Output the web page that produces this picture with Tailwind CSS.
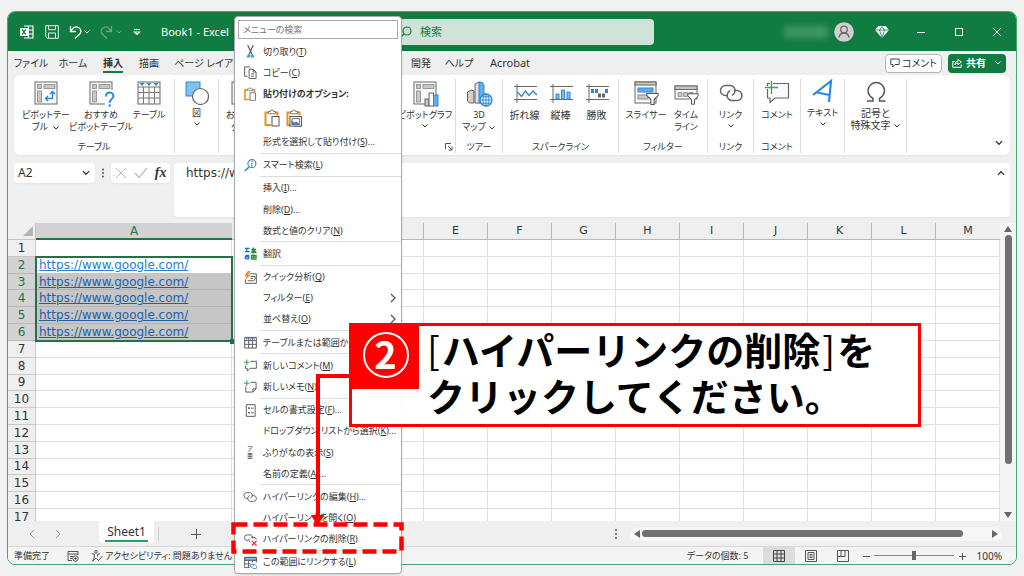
<!DOCTYPE html>
<html lang="ja">
<head>
<meta charset="utf-8">
<title>Book1 - Excel</title>
<script src="https://cdn.jsdelivr.net/npm/@tailwindcss/browser@4"></script>
</head>
<body class="relative flex h-screen flex-col overflow-hidden bg-[#f1f1f1] px-[7px] pt-[11px] pb-[11px] text-[10px] leading-3 text-[#333] [font-family:'Noto_Sans','Noto_Sans_CJK_JP',sans-serif] [font-feature-settings:'palt']">

<svg class="hidden">
  <defs>
    <symbol id="chev" viewBox="0 0 8 6"><path d="M1.500 1.500 4 4l2.500-2.500" fill="none" stroke="currentColor" stroke-width="1"/></symbol>
    <symbol id="pivot" viewBox="0 0 24 24"><rect x="1" y="1" width="22" height="22" fill="#fafafa" stroke="#666"/><rect x="3.500" y="3.500" width="4" height="4" fill="#c9c7c5" stroke="#888" stroke-width=".8"/><rect x="10" y="3.500" width="11" height="4" fill="#c9c7c5" stroke="#888" stroke-width=".8"/><rect x="3.500" y="10" width="4" height="11" fill="#c9c7c5" stroke="#888" stroke-width=".8"/></symbol>
    <symbol id="funnel" viewBox="0 0 12 12"><path d="M.8.8h10.400v2L7.500 6.500v4.700h-3V6.500L.8 2.800z" fill="#fff" stroke="#555" stroke-width="1"/></symbol>
    <symbol id="link" viewBox="0 0 24 18"><g fill="none" stroke="currentColor" stroke-width="1.500"><path d="M9 11.500H6.500a5 5 0 0 1 0-10H11a5 5 0 0 1 4.500 7.500q-.8 1.500-2.500 2.200"/><path d="M15 6.500h3a5 5 0 0 1 0 10h-5a5 5 0 0 1-4.300-7.400q.8-1.600 2.500-2.300"/></g></symbol>
    <symbol id="clip" viewBox="0 0 16 18"><path d="M5 3.500H1.500v12.500H7M11 3.500H13.500V6.500" fill="none" stroke="#ed8b1c" stroke-width="2"/><path d="M4.500 4.800V2.500h2a1.500 1.500 0 0 1 3 0h2v2.300z" fill="#fff" stroke="#777"/><rect x="8" y="7.500" width="7" height="9.500" fill="#fff" stroke="#555"/></symbol>
  </defs>
</svg>

<div class="flex min-h-0 flex-1 flex-col overflow-hidden rounded-lg border border-[#43a574] bg-[#efefef]">

  <!-- title bar -->
  <header class="flex h-[39px] shrink-0 items-center bg-[#107c41] text-white">
    <div class="flex w-[384px] items-center pl-3">
      <svg class="h-3.5 w-3.5" viewBox="0 0 14 14"><path d="M4 1h9v12H4M4 5h9M4 9h9M8.500 1v12" fill="none" stroke="#fff" stroke-width="1.200"/><rect x="0" y="3" width="8" height="8" fill="#fff"/><path d="m2.300 4.700 3.400 4.600M5.700 4.700 2.300 9.300" stroke="#107c41" stroke-width="1.300"/></svg>
      <button class="ml-[11px]" aria-label="保存"><svg class="h-3.5 w-3.5" viewBox="0 0 14 14" fill="none" stroke="#e4f2ea"><path d="M.7.7h12.600v12.600H2.500L.7 11.500z"/><path d="M3.500.7v4h7v-4M3.500 13V8h7v5"/></svg></button>
      <button class="ml-2.5 flex items-center" aria-label="元に戻す"><svg class="h-3.5 w-3.5" viewBox="0 0 14 14" fill="none" stroke="#fff" stroke-width="1.300"><path d="M1.500 1v5.500H7M1.700 6.300C4 2.500 7 1.200 9.500 2.500c3 1.700 3 5 .8 7L6 13.500"/></svg><svg class="h-1.5 w-2"><use href="#chev"/></svg></button>
      <button class="ml-2 flex items-center text-[#5fae84]" aria-label="やり直し"><svg class="h-3.5 w-3.5" viewBox="0 0 14 14" fill="none" stroke="currentColor" stroke-width="1.300"><path d="M12.500 1v5.500H7M12.300 6.300C10 2.500 7 1.200 4.500 2.500c-3 1.700-3 5-.8 7L8 13.500"/></svg><svg class="ml-0.5 h-1.5 w-2"><use href="#chev"/></svg></button>
      <button class="ml-2.5" aria-label="クイック アクセス"><svg class="h-2 w-2" viewBox="0 0 8 8" fill="none" stroke="#fff" stroke-width="1.200"><path d="M1 1.500h6M1.500 4 4 6.500 6.500 4z"/></svg></button>
      <h1 class="ml-5 text-[11px] whitespace-pre">Book1 - Excel</h1>
    </div>
    <label class="flex h-[26px] w-[262px] items-center gap-2 rounded bg-[#cfe3d8] pl-2 text-[#107c41]">
      <svg class="h-3 w-3" viewBox="0 0 12 12" fill="none" stroke="#107c41" stroke-width="1.200"><circle cx="7" cy="5" r="4"/><path d="M4 8 .5 11.500"/></svg>
      <input class="w-40 bg-transparent text-[11px] outline-none placeholder:text-[#107c41]" placeholder="検索" aria-label="検索">
    </label>
    <div class="ml-auto flex items-center pr-3.5">
      <span class="mr-1.5 h-3 w-11 bg-white/20 blur-[3px]"></span>
      <svg class="h-5 w-5" viewBox="0 0 20 20"><circle cx="10" cy="10" r="9.800" fill="#d0d0d0"/><circle cx="10" cy="7.500" r="3.300" fill="none" stroke="#666" stroke-width="1.300"/><path d="M5 15.500c.5-3 2.500-4.500 5-4.500s4.500 1.500 5 4.500" fill="none" stroke="#666" stroke-width="1.300"/></svg>
      <svg class="ml-[21px] h-3 w-3.5" viewBox="0 0 14 12"><path d="M3.300 0h7.400L14 4 7 12 0 4z" fill="#fff"/><path d="M0 4h14M4.500 4 7 11.500 9.500 4M4.500 4 7 .5 9.500 4" fill="none" stroke="#107c41" stroke-width=".8"/></svg>
      <button class="ml-[27px]" aria-label="最小化"><svg class="h-2.5 w-2.5" viewBox="0 0 10 10"><path d="M1 5.500h8" stroke="#fff"/></svg></button>
      <button class="ml-7" aria-label="最大化"><svg class="h-2.5 w-2.5" viewBox="0 0 10 10"><rect x="1.500" y="1.500" width="7" height="7" fill="none" stroke="#fff"/></svg></button>
      <button class="ml-7" aria-label="閉じる"><svg class="h-2.5 w-2.5" viewBox="0 0 10 10"><path d="m1 1 8 8M9 1 1 9" stroke="#fff"/></svg></button>
    </div>
  </header>

  <!-- ribbon tabs -->
  <nav class="flex h-6 shrink-0 items-center text-center whitespace-nowrap">
    <button class="w-[46px]">ファイル</button>
    <button class="w-[38px]">ホーム</button>
    <button class="flex h-full w-[42px] items-center justify-center font-bold"><span class="border-b-2 border-[#107c41] pt-1 pb-0.5">挿入</span></button>
    <button class="w-[30px]">描画</button>
    <button class="w-24">ページ レイアウト</button>
    <button class="w-9">数式</button>
    <button class="w-9">データ</button>
    <button class="w-8">校閲</button>
    <button class="w-9">表示</button>
    <button class="w-[42px]">開発</button>
    <button class="w-[34px]">ヘルプ</button>
    <button class="w-[68px] text-[11px]">Acrobat</button>
    <div class="ml-auto flex gap-1.5 pr-2.5">
      <button class="flex h-[19px] w-[57px] items-center justify-center gap-0.5 rounded border border-[#b5b5b5] bg-white"><svg class="h-2.5 w-2.5" viewBox="0 0 10 10" fill="none" stroke="#444"><path d="M.8 1h8.400v5.500H5L2.800 9V6.500h-2z"/></svg>コメント</button>
      <button class="flex h-[19px] w-[58px] items-center justify-center gap-1 rounded bg-[#107c41] font-bold text-white"><svg class="h-2.5 w-2.5" viewBox="0 0 10 10" fill="none" stroke="#fff"><path d="M3 3.500H.8V9.300h8.400V6.500M3 7c0-3 1.500-3.500 3-3.500V1.300L9.300 4 6 6.800V5C4.500 5 3.700 5.500 3 7"/></svg>共有<svg class="ml-1 h-1.5 w-2"><use href="#chev"/></svg></button>
    </div>
  </nav>

  <!-- ribbon -->
  <section class="mx-1.5 flex h-20 shrink-0 rounded-md bg-white pt-1 pb-0.5 text-center text-[9px] whitespace-nowrap shadow-xs">
    <div class="flex w-[161px] flex-col justify-between border-r border-[#dcdcdc]">
      <div class="flex">
        <button class="flex w-16 flex-col items-center"><svg class="mt-0.5 mb-1 h-6 w-6" viewBox="0 0 24 24"><use href="#pivot"/><path d="M11.500 17.500h7v-7M14 15l-2.500 2.500L14 20M16 13l2.500-2.500L21 13" fill="none" stroke="#2b88d8" stroke-width="1.400"/></svg><span>ピボットテー<br>ブル<svg class="ml-1 inline h-1.5 w-2"><use href="#chev"/></svg></span></button>
        <button class="flex w-[46px] flex-col items-center"><svg class="mt-0.5 mb-1 h-6 w-6 overflow-visible" viewBox="0 0 24 24"><use href="#pivot"/><path d="M16 9h9v17h-9z" fill="#fff"/><path d="M17 15.500c.3-5.500 8-5 7.300.2-.3 2-3.600 2.800-3.600 6" fill="none" stroke="#2b88d8" stroke-width="2"/><circle cx="20.700" cy="24.500" r="1.200" fill="#2b88d8"/></svg><span>おすすめ<br>ピボットテーブル</span></button>
        <button class="flex w-[50px] flex-col items-center"><svg class="mt-0.5 mb-1 h-6 w-6" viewBox="0 0 24 24"><rect x="1" y="1" width="22" height="22" fill="#fafafa" stroke="#666"/><path d="M1 6h22M1 11.500h22M1 17h22M6.500 6v17M12 6v17M17.500 6v17" stroke="#777" fill="none"/><path d="M2.500 2h5L5 5zM9.500 2h5L12 5zM16.500 2h5L19 5z" fill="#2b88d8"/></svg><span>テーブル</span></button>
      </div>
      <span>テーブル</span>
    </div>
    <div class="w-11 border-r border-[#dcdcdc]">
      <button class="flex w-full flex-col items-center"><svg class="my-0.5 h-6 w-6" viewBox="0 0 24 24"><rect x="1" y="1" width="14" height="14" fill="#83beec" stroke="#2b88d8"/><circle cx="15.500" cy="15.500" r="8" fill="#fff" stroke="#666" stroke-width="1.200"/></svg>図<svg class="mt-0.5 h-1.5 w-2"><use href="#chev"/></svg></button>
    </div>
    <div class="relative flex w-[237px] justify-between border-r border-[#dcdcdc]">
      <button class="flex w-12 flex-col items-center"><svg class="mt-0.5 mb-1 h-6 w-6"><use href="#pivot"/></svg><span>おすすめ<br>グラフ</span></button>
      <button class="flex w-[60px] flex-col items-center"><svg class="mt-0.5 mb-1 h-6 w-6 overflow-visible" viewBox="0 0 24 24"><use href="#pivot"/><g stroke="#666"><rect x="12" y="18" width="4" height="7" fill="#c9c7c5"/><rect x="16" y="12" width="4.500" height="13" fill="#fff"/><rect x="20.500" y="14" width="4.500" height="11" fill="#62aee8" stroke="#2b88d8"/></g></svg><span>ピボットグラフ</span><svg class="mt-0.5 h-1.5 w-2"><use href="#chev"/></svg></button>
      <svg class="absolute right-0.5 bottom-0.5 h-2 w-2" viewBox="0 0 8 8" fill="none" stroke="#555"><path d="M.5 6V.5H6M3 3l4 4M7 3.500V7H3.500"/></svg>
    </div>
    <div class="flex w-[47px] flex-col justify-between border-r border-[#dcdcdc]">
      <button class="flex flex-col items-center"><svg class="mt-0.5 mb-1 h-6 w-6 overflow-visible" viewBox="0 0 24 24"><path d="M.5 11 4 9l3 1v12H2.500L.5 20z" fill="#d2d0ce" stroke="#666"/><path d="M8 3l4-2 3 1v20H8z" fill="#e4e2e0" stroke="#666"/><path d="M12 1.500 15 1l2 3v18h-5z" fill="#62aee8" stroke="#2b88d8"/><circle cx="19" cy="19" r="6" fill="#fff" stroke="#2b88d8" stroke-width="1.300"/><path d="M13 19h12M19 13v12M14.500 15.800h9M14.500 22.200h9" stroke="#2b88d8" fill="none"/><ellipse cx="19" cy="19" rx="3" ry="6" fill="none" stroke="#2b88d8"/></svg><span>3D<br>マップ<svg class="ml-0.5 inline h-1.5 w-2"><use href="#chev"/></svg></span></button>
      <span>ツアー</span>
    </div>
    <div class="flex w-[116px] flex-col justify-between border-r border-[#dcdcdc]">
      <div class="flex justify-center text-[10px]">
        <button class="flex w-9 flex-col items-center"><svg class="mt-0.5 mb-1 h-6 w-6" viewBox="0 0 24 24" fill="none"><path d="M4 3v19M1 5.500h23M1 18.500h23" stroke="#666"/><path d="m4.500 11 4 4.500 4-5.500 3.500 4.500L20 10l4 4" stroke="#2b88d8" stroke-width="1.300"/></svg>折れ線</button>
        <button class="flex w-9 flex-col items-center"><svg class="mt-0.5 mb-1 h-6 w-6" viewBox="0 0 24 24" fill="none"><path d="M4 3v19M1 5.500h23M1 18.500h23" stroke="#666"/><path d="M7 13h3v5H7zM12.500 9h3v9h-3zM18 11h3v7h-3z" fill="#83beec" stroke="#2b88d8"/></svg>縦棒</button>
        <button class="flex w-9 flex-col items-center"><svg class="mt-0.5 mb-1 h-6 w-6" viewBox="0 0 24 24"><path d="M4 3v19M1 5.500h23M1 18.500h23" stroke="#666"/><path d="M6 8h3v4H6zM10 8h3v4h-3zM20 8h3v4h-3z" fill="#2b88d8"/><path d="M13 12.500h3v4h-3zM17 12.500h3v4h-3z" fill="#666"/></svg>勝敗</button>
      </div>
      <span>スパークライン</span>
    </div>
    <div class="flex w-[89px] flex-col justify-between border-r border-[#dcdcdc]">
      <div class="flex justify-center pl-1.5">
        <button class="flex w-10 flex-col items-center"><svg class="mt-0.5 mb-1 h-6 w-6 overflow-visible" viewBox="0 0 24 24"><rect x="1" y="1" width="21" height="21" fill="#fafafa" stroke="#666"/><rect x="1" y="1" width="21" height="3" fill="#c9c7c5" stroke="#666"/><rect x="4" y="7" width="15" height="4" fill="#62aee8" stroke="#2b88d8"/><rect x="4" y="14" width="10" height="4" fill="#c9c7c5" stroke="#888"/><svg x="12" y="11.500" width="13" height="13"><use href="#funnel"/></svg></svg>スライサー</button>
        <button class="flex w-10 flex-col items-center"><svg class="mt-0.5 mb-1 h-6 w-6 overflow-visible" viewBox="0 0 24 24"><rect x="1" y="5" width="22" height="13" fill="#fafafa" stroke="#666"/><rect x="1" y="5" width="22" height="3.500" fill="#c9c7c5" stroke="#666"/><path d="M4 11.500h4v4H4zM9.500 11.500h4v4h-4zM15 11.500h4v4h-4z" fill="#c9c7c5" stroke="#888" stroke-width=".8"/><svg x="13" y="12" width="12" height="12"><use href="#funnel"/></svg></svg><span>タイム<br>ライン</span></button>
      </div>
      <span>フィルター</span>
    </div>
    <div class="flex w-[46px] flex-col justify-between border-r border-[#dcdcdc]">
      <button class="flex flex-col items-center"><svg class="mt-0.5 mb-1 h-6 w-6 text-[#666]"><use href="#link"/></svg>リンク<svg class="mt-0.5 h-1.5 w-2"><use href="#chev"/></svg></button>
      <span>リンク</span>
    </div>
    <div class="flex w-[47px] flex-col justify-between border-r border-[#dcdcdc]">
      <button class="flex flex-col items-center"><svg class="mt-0.5 mb-1 h-6 w-6 overflow-visible" viewBox="0 0 24 24"><path d="M2.500 2.500h21V17H10l-5 4.500V17H2.500z" fill="#fafafa" stroke="#666" stroke-width="1.200"/><path d="M0 6.500h13M6.500 0v13" stroke="#fff" stroke-width="3"/><path d="M0 6.500h13M6.500 0v13" stroke="#3fa35b" stroke-width="1.400"/></svg>コメント</button>
      <span>コメント</span>
    </div>
    <div class="w-11 border-r border-[#dcdcdc]">
      <button class="flex w-full flex-col items-center"><svg class="mb-0.5 h-6 w-6" viewBox="0 0 24 24"><path d="M2 16 20 2l-2 21M6 13.500 18.500 16" fill="none" stroke="#2b88d8" stroke-width="2.200"/></svg><span class="mt-0.5">テキスト</span><svg class="mt-0.5 h-1.5 w-2"><use href="#chev"/></svg></button>
    </div>
    <div class="w-[62px] border-r border-[#dcdcdc] text-[10px]">
      <button class="flex w-full flex-col items-center"><svg class="mb-0.5 h-6 w-6" viewBox="0 0 24 24"><path d="M3 22h6v-2.500C5.500 17.500 4 14.500 4 11a8.300 8.300 0 0 1 16.500 0c0 3.500-1.500 6.500-5 8.500V22h6" fill="none" stroke="#555" stroke-width="1.500"/></svg><span class="mt-0.5">記号と<br>特殊文字<svg class="ml-0.5 inline h-1.5 w-2"><use href="#chev"/></svg></span></button>
    </div>
    <button class="mt-auto mr-1.5 mb-1.5 ml-auto" aria-label="リボンを折りたたむ"><svg class="h-2 w-2.5"><use href="#chev"/></svg></button>
  </section>

  <!-- formula bar -->
  <section class="flex h-[68px] shrink-0 items-start px-1.5 pt-2 text-[12px] leading-4">
    <button class="flex h-5 w-[81px] items-center justify-between rounded bg-white px-1 shadow-xs">A2<svg class="h-2 w-2.5"><use href="#chev"/></svg></button>
    <svg class="mx-1.5 h-5 w-1" viewBox="0 0 4 20" fill="#555"><circle cx="2" cy="6.500" r="1"/><circle cx="2" cy="10" r="1"/><circle cx="2" cy="13.500" r="1"/></svg>
    <div class="mr-1 flex h-5 w-[59px] items-center justify-around rounded bg-white shadow-xs">
      <button aria-label="キャンセル"><svg class="h-3 w-3" viewBox="0 0 12 12"><path d="m1 1 10 10M11 1 1 11" stroke="#bbb"/></svg></button>
      <button aria-label="入力"><svg class="h-3 w-3.5" viewBox="0 0 14 12"><path d="m1 6 4 4.500L13 1" fill="none" stroke="#bbb" stroke-width="1.200"/></svg></button>
      <button class="text-[14px] font-bold italic [font-family:'Liberation_Serif',serif]">fx</button>
    </div>
    <div class="flex h-[54px] flex-1 justify-between rounded bg-white px-3 pt-0.5 shadow-xs [font-family:'DejaVu_Sans',sans-serif]">https://www.google.com/
      <svg class="mt-1 -mr-2 h-2 w-2.5 rotate-180"><use href="#chev"/></svg></div>
  </section>

  <!-- sheet -->
  <section class="flex min-h-0 flex-1">
    <div class="min-w-0 flex-1 overflow-hidden">
      <table class="h-[303px] w-full table-fixed border-separate border-spacing-0 text-[12px] [font-family:'DejaVu_Sans',sans-serif]">
        <thead id="head"></thead>
        <tbody id="grid" class="bg-white"></tbody>
      </table>
    </div>
    <div class="flex w-4 flex-col items-center bg-[#f4f4f4] pt-0.5">
      <svg class="h-2 w-2" viewBox="0 0 8 8"><path d="M4 1 8 7H0z" fill="#666"/></svg>
      <span class="mt-0.5 h-[229px] w-[7px] rounded-full bg-[#707070]"></span>
      <svg class="mt-auto mb-0.5 h-2 w-2" viewBox="0 0 8 8"><path d="M4 7 8 1H0z" fill="#666"/></svg>
    </div>
  </section>

  <!-- sheet tabs -->
  <section class="flex h-[26px] shrink-0 items-center border-b border-[#d8d8d8]">
    <button class="ml-5" aria-label="前のシート"><svg class="h-2.5 w-2" viewBox="0 0 8 10"><path d="M6 1 2 5l4 4" fill="none" stroke="#999"/></svg></button>
    <button class="ml-[18px]" aria-label="次のシート"><svg class="h-2.5 w-2" viewBox="0 0 8 10"><path d="m2 1 4 4-4 4" fill="none" stroke="#999"/></svg></button>
    <button class="mb-auto ml-[37px] flex h-[22px] w-[55px] items-center justify-center rounded-b bg-white text-[12px]"><span class="border-b-2 border-[#21a366] px-0.5 pt-1 pb-0.5">Sheet1</span></button>
    <span class="ml-1 h-3.5 w-px bg-[#d0d0d0]"></span>
    <button class="ml-8" aria-label="新しいシート"><svg class="h-2.5 w-2.5" viewBox="0 0 10 10"><path d="M0 5.500h10M5.500 0v10" stroke="#555"/></svg></button>
    <svg class="ml-auto h-3 w-1" viewBox="0 0 4 12" fill="#555"><circle cx="2" cy="2" r="1"/><circle cx="2" cy="6" r="1"/><circle cx="2" cy="10" r="1"/></svg>
    <div class="mr-3.5 ml-3 flex h-3.5 w-[372px] items-center rounded-full bg-[#f6f6f6] px-1">
      <svg class="h-2 w-1.5" viewBox="0 0 6 8"><path d="M0 4 6 0v8z" fill="#666"/></svg>
      <span class="ml-0.5 h-[7px] w-[321px] rounded-full bg-[#707070]"></span>
      <svg class="ml-auto h-2 w-1.5" viewBox="0 0 6 8"><path d="M6 4 0 0v8z" fill="#666"/></svg>
    </div>
  </section>

  <!-- status bar -->
  <footer class="flex h-[17px] shrink-0 items-center bg-[#f4f4f4] pl-1.5 whitespace-nowrap">
    <span class="w-[53px] text-[9px]">準備完了</span>
    <svg class="h-3 w-3" viewBox="0 0 12 12" fill="none" stroke="#555"><path d="M5 10.500H1V1.500h10V5M1 4h10M3 6.500h3M3 8.500h2"/><circle cx="8.500" cy="8.500" r="2.700"/><circle cx="8.500" cy="8.500" r=".8" fill="#555"/></svg>
    <svg class="mr-0.5 ml-3 h-3 w-3" viewBox="0 0 12 12" fill="none" stroke="#555"><circle cx="5" cy="1.800" r="1.300"/><path d="M.8 3.500 3.500 4.500 3 8l-1.500 3.300L5 8M9.200 3.500 6.500 4.500v2M5.500 8.500l2 2L11.500 6"/></svg>
    <span class="text-[9px]">アクセシビリティ: 問題ありません</span>
    <span class="ml-auto text-[9px]">データの個数: 5</span>
    <button class="ml-3.5 flex h-full w-8 items-center justify-center bg-[#dcdcdc]" aria-label="標準"><svg class="h-3 w-3" viewBox="0 0 12 12"><path d="M.5.5h11v11H.5zM.5 4h11M.5 8h11M4 .5v11M8 .5v11" fill="none" stroke="#444"/></svg></button>
    <button class="flex w-8 justify-center" aria-label="ページ レイアウト"><svg class="h-3 w-3" viewBox="0 0 12 12"><path d="M.5.5h11v11H.5zM3 2.500h6v7H3zM4.500 4.500h3M4.500 6h3M4.500 7.500h3" fill="none" stroke="#555"/></svg></button>
    <button class="flex w-8 justify-center" aria-label="改ページ"><svg class="h-3 w-3" viewBox="0 0 12 12"><path d="M.5.5h11v11H.5zM4 .5v6M8 .5v6H.5" fill="none" stroke="#555"/></svg></button>
    <button class="ml-1" aria-label="縮小"><svg class="h-2 w-2" viewBox="0 0 8 8"><path d="M0 4.500h7" stroke="#555"/></svg></button>
    <input type="range" min="0" max="100" value="50" aria-label="ズーム" class="mx-[3px] h-3 w-20 appearance-none bg-[linear-gradient(#888,#888)] bg-[length:100%_1px] bg-center bg-no-repeat [&::-webkit-slider-thumb]:h-[9px] [&::-webkit-slider-thumb]:w-1 [&::-webkit-slider-thumb]:appearance-none [&::-webkit-slider-thumb]:bg-[#666]">
    <button class="ml-0.5" aria-label="拡大"><svg class="h-2 w-2" viewBox="0 0 8 8"><path d="M0 4.500h7M3.500 1v7" stroke="#555"/></svg></button>
    <span class="mr-3.5 ml-2.5">100%</span>
  </footer>
</div>

<!-- context menu -->
<div class="absolute top-4 bottom-[2px] left-[234px] flex w-[168px] flex-col rounded border border-[#aaa] bg-white shadow-sm" role="menu">
  <input class="mx-[3px] mt-[3px] mb-0.5 h-[19px] shrink-0 border border-[#aaa] px-1 text-[9px] outline-none placeholder:text-[#777]" placeholder="メニューの検索" aria-label="メニューの検索">
  <div id="menu" class="flex min-h-0 flex-1 flex-col whitespace-nowrap"></div>
</div>

<!-- red outline and arrow -->
<svg class="pointer-events-none absolute top-0 left-0 h-full w-[420px]" fill="none">
  <path d="M350 376H318v142" stroke="#f00" stroke-width="4"/>
  <path d="M311 515h13l-6.500 11z" fill="#f00"/>
  <rect x="233.500" y="524.500" width="168" height="27" stroke="#f00" stroke-width="4.500" stroke-dasharray="14 6"/>
</svg>

<!-- callout -->
<div class="absolute top-[323px] left-[349px] flex h-[104px] w-[572px] border-[3px] border-[#f00] bg-white/95 text-black [font-family:'Noto_Sans_CJK_JP',sans-serif]">
  <div class="-mt-px flex h-16 w-[67px] shrink-0 items-center justify-center bg-[#f00] pb-1">
    <span class="flex h-[46px] w-[46px] items-center justify-center rounded-full border-2 border-white pb-1 text-[38px] leading-[38px] font-bold text-white">2</span>
  </div>
  <p class="pl-2 text-[38px] leading-[46px] font-bold whitespace-nowrap [font-feature-settings:normal]"><span class="pr-0.5 font-normal">[</span>ハイパーリンクの削除<span class="px-0.5 font-normal">]</span>を<br>クリックしてください。</p>
</div>

<script>
const cols = ['A','B','C','D','E','F','G','H','I','J','K','L','M'];
document.getElementById('head').innerHTML = '<tr class="h-[17px]">' +
  '<th class="w-7 border-r border-b border-[#c4c4c4] p-0"><svg class="ml-auto mr-0.5 h-2.5 w-2.5" viewBox="0 0 10 10"><path d="M10 0v10H0z" fill="#b4b4b4"/></svg></th>' +
  cols.map((c, i) => {
    if (i === 0) return '<th class="w-[196px] border-b-2 border-[#217346] bg-[#d2d2d2] p-0 font-normal text-[#217346]">A</th>';
    if (i === 12) return '<th class="border-b border-[#b8b8b8] p-0 font-normal text-[11px]">M</th>';
    return '<th class="w-16 border-r border-b border-[#b8b8b8] p-0 font-normal text-[11px]">' + c + '</th>';
  }).join('') + '</tr>';

let rows = '';
for (let r = 1; r <= 17; r++) {
  const sel = r >= 2 && r <= 6;
  rows += '<tr>' + (sel
    ? '<th class="border-r border-b border-[#b8b8b8] bg-[#d2d2d2] p-0 font-normal text-[#217346]">' + r + '</th>'
    : '<th class="border-r border-b border-[#c8c8c8] bg-[#efefef] p-0 font-normal">' + r + '</th>');
  const link = '<a class="block h-3 leading-3 text-inherit underline" href="https://www.google.com/">https://www.google.com/</a>';
  if (r === 2) rows += '<td class="relative border-b border-[#c6c6c6] py-0 px-[3px] text-[#2b7cd3]">' + link +
    '<span class="pointer-events-none absolute -top-px -left-px h-[86px] w-[198px] border-2 border-[#217346]"><span class="absolute -right-1 -bottom-1 h-[5px] w-[5px] bg-[#217346]"></span></span></td>';
  else if (sel) rows += '<td class="border-b border-[#b4b4b4] bg-[#c6c6c6] py-0 px-[3px] text-[#1f5fa8]">' + link + '</td>';
  else rows += '<td class="border-r border-b border-[#e0e0e0] p-0"></td>';
  for (let c = 1; c < 13; c++) rows += '<td class="border-r border-b border-[#e0e0e0] p-0"></td>';
  rows += '</tr>';
}
document.getElementById('grid').innerHTML = rows;

const s = (vb, body) => '<svg class="h-[13px] w-[13px]" viewBox="0 0 ' + vb + '" fill="none">' + body + '</svg>';
const icons = {
  cut: s('14 14', '<path d="M4 0l4.500 10M10 0 5.500 10" stroke="#555" stroke-width="1.200"/><path d="M2.500 13.500 4.500 9.500l2.500 1.500-.5 2.500zM11.500 13.500 9.500 9.500 7 11l.5 2.500z" fill="#4a9fe0"/>'),
  copy: s('14 14', '<path d="M4 11H.7V1H6l1 1" stroke="#555"/><path d="M5.500 3.500H10L13 6.500v7H5.500z" fill="#fff" stroke="#555"/><path d="M10 3.500v3h3M7.500 8.500h3.500M7.500 11h3.500" stroke="#555"/>'),
  paste: '<svg class="h-3.5 w-3.5"><use href="#clip"/></svg>',
  smart: s('14 14', '<circle cx="8.500" cy="5" r="4.300" stroke="#2b88d8" stroke-width="1.200"/><path d="M5.500 8.500.8 13" stroke="#2b88d8" stroke-width="1.600"/><path d="M8.500 4.500V8M8.500 2.200v1.200" stroke="#555"/>'),
  trans: s('14 14', '<path d="M1 1.500h5M1 5h5M3 1.500v4M5 8.500v4.500M1.500 9h3.500M1.500 13V10.500h3M1.500 12.800H5" stroke="#1f6fc0" stroke-width="1.400"/><path d="M8 2.500h5M10 .5v6M12.500 4c-1 3-4.500 3-4 .8S13 4 13 6.500M8 9h5v4H8zM10.500 8v5.500M8 11h5" stroke="#1f8a3b" stroke-width="1.300"/>'),
  quick: s('14 14', '<path d="M6 3h7.300v10.300H1.500V9M4 10.500h6.500L12 8.500V6H7M7 8h3" stroke="#555"/><path d="M4 0 .5 5.500h2.300L1.500 9.500 7 4H4.500L7 0z" fill="#e58a2b"/>'),
  table: s('14 14', '<path d="M.7 1.500h12.600v11.500H.7zM.7 5h12.600M.7 9h12.600M5 2v11M9 2v11" stroke="#555"/><path d="M1.500 2.300h3L3 4.300zM5.500 2.300h3L7 4.300zM9.500 2.300h3L11 4.300z" fill="#2b88d8"/>'),
  comment: s('14 14', '<path d="M7 2.500h6.300v7.500H6.500L3.500 13v-3H1.500V7" stroke="#555"/><path d="M0 3.500h6M3 .5v6" stroke="#3fa35b" stroke-width="1.200"/>'),
  memo: s('14 14', '<path d="M7 2.500h6V9.500L9.500 13H2V7M13 9.500H9.500V13" stroke="#555"/><path d="M0 3.500h6M3 .5v6" stroke="#3fa35b" stroke-width="1.200"/>'),
  format: s('14 14', '<path d="M2.500.7h9.500v12.600H2.500zM7.500 4.500h3M7.500 9.500h3" stroke="#555"/><path d="M4.500 3.500h1.800v1.800H4.500zM4.500 8.500h1.800v1.800H4.500z" fill="#555"/>'),
  furi: '<span class="flex flex-col items-center text-[6px] leading-[7px]"><span>ア</span><span>亜</span></span>',
  link: '<svg class="h-3.5 w-3.5 text-[#555]"><use href="#link"/></svg>',
  unlink: s('14 14', '<path d="M4.500 8H3.500a3 3 0 0 1 0-6h3a3 3 0 0 1 2.700 4M7.500 4.500h3a3 3 0 0 1 2.800 2.500M7 10a3 3 0 0 1-1.500-4" stroke="#555"/><path d="m8.500 8.500 5 5M13.500 8.500l-5 5" stroke="#e03a3a" stroke-width="1.400"/>'),
  range: s('14 14', '<path d="M6 12.500H.7V1.500h12.600V7M.7 4.500h12.600M.7 8.500H7M5 2v10.500M9 2v5" stroke="#555"/><path d="M.7 1.500h12.600v3H.7z" fill="#83beec" stroke="#555"/><path d="M9.500 12H8.300a1.500 1.500 0 0 1 0-3h2M10 10.500a1.500 1.500 0 0 1 1.500-1.500h1M9.500 13.500h3a1.500 1.500 0 0 0 0-3" stroke="#2b88d8"/>')
};
const items = [
  ['cut','切り取り','T'], ['copy','コピー','C'], ['paste','貼り付けのオプション:',''], 'PASTE',
  ['','形式を選択して貼り付け','S','...'], '-', ['smart','スマート検索','L'], '-',
  ['','挿入','I','...'], ['','削除','D','...'], ['','数式と値のクリア','N'], '-', ['trans','翻訳',''], '-',
  ['quick','クイック分析','Q'], ['','フィルター','E','>'], ['','並べ替え','O','>'], '-',
  ['table','テーブルまたは範囲からデータを取得','G','...'], '-', ['comment','新しいコメント','M'], ['memo','新しいメモ','N'], '-',
  ['format','セルの書式設定','F','...'], ['','ドロップダウン リストから選択','K','...'], ['furi','ふりがなの表示','S'], ['','名前の定義','A','...'], '-',
  ['link','ハイパーリンクの編集','H','...'], ['','ハイパーリンクを開く','O'], ['unlink','ハイパーリンクの削除','R'], '-', ['range','この範囲にリンクする','L']
];
document.getElementById('menu').innerHTML = items.map(it => {
  if (it === '-') return '<hr class="ml-[25px] h-0.5 shrink-0 border-t border-[#dcdcdc]">';
  if (it === 'PASTE') return '<div class="flex h-[27px] shrink-0 items-center gap-1.5 pl-[29px]"><button aria-label="貼り付け"><svg class="h-[18px] w-4"><use href="#clip"/></svg></button><button aria-label="図として貼り付け"><svg class="h-[18px] w-4" viewBox="0 0 16 18"><use href="#clip"/><rect x="4" y="7.500" width="11.500" height="9.500" fill="#fff" stroke="#555"/><path d="M5.500 15.500v-4l3 2 2-1 3.500 3z" fill="#2b88d8"/><path d="M6 9.500h7.500v6H6z" fill="none" stroke="#777"/></svg></button></div>';
  const [ic, t, k, tail] = it;
  const key = k ? '(<u>' + k + '</u>)' : '';
  const dots = tail === '...' ? '...' : '';
  const arrow = tail === '>' ? '<svg class="mr-1 ml-auto h-2.5 w-2" viewBox="0 0 8 10"><path d="m2 1 4 4-4 4" fill="none" stroke="#555" stroke-width="1.200"/></svg>' : '';
  return '<button role="menuitem" class="flex min-h-0 flex-1 items-center overflow-hidden pl-2 text-[9px]"><span class="mr-1.5 flex w-3.5 shrink-0 justify-center">' + (icons[ic] || '') + '</span>' +
    (ic === 'paste' ? '<b>' + t + '</b>' : '<span>' + t + key + dots + '</span>') + arrow + '</button>';
}).join('');
</script>
</body>
</html>
